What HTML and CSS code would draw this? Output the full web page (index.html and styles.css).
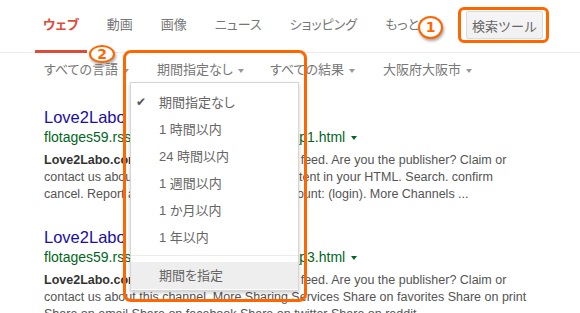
FILE: index.html
```html
<!DOCTYPE html>
<html lang="ja">
<head>
    <meta charset="UTF-8">
    <meta name="viewport" content="width=device-width, initial-scale=1.0">
    <title>検索ツール</title>
    <link rel="stylesheet" href="styles.css">
</head>
<body>
    <div class="page">
        <div class="tabs">
            <a class="tab active">ウェブ</a>
            <a class="tab">動画</a>
            <a class="tab">画像</a>
            <a class="tab">ニュース</a>
            <a class="tab">ショッピング</a>
            <a class="tab">もっと!</a>
            <button class="tools-button">検索ツール</button>
        </div>

        <div class="tools">
            <span class="tool">すべての言語<i class="caret"></i></span>
            <span class="tool">期間指定なし<i class="caret"></i></span>
            <span class="tool">すべての結果<i class="caret"></i></span>
            <span class="tool">大阪府大阪市<i class="caret"></i></span>
        </div>

        <div class="results">
            <div class="result">
                <a class="title">Love2Labo</a>
                <div class="url">flotages59.rssing.com/chan-6427301/all_p1.html<i class="url-caret"></i></div>
                <div class="snippet">
                    <b>Love2Labo.com</b> RSS channel - Love2Labo's feed. Are you the publisher? Claim or<br>
                    contact us about this channel. Embed this content in your HTML. Search. confirm<br>
                    cancel. Report adult content: click to rate: Account: (login). More Channels ...
                </div>
            </div>
            <div class="result">
                <a class="title">Love2Labo</a>
                <div class="url">flotages59.rssing.com/chan-6427301/all_p3.html<i class="url-caret"></i></div>
                <div class="snippet">
                    <b>Love2Labo.com</b> RSS channel - Love2Labo's feed. Are you the publisher? Claim or<br>
                    contact us about this channel. More Sharing Services Share on favorites Share on print<br>
                    Share on email Share on facebook Share on twitter Share on reddit
                </div>
            </div>
        </div>

        <!-- 期間のドロップダウン -->
        <div class="menu">
            <div class="menu-item checked">期間指定なし</div>
            <div class="menu-item">1 時間以内</div>
            <div class="menu-item">24 時間以内</div>
            <div class="menu-item">1 週間以内</div>
            <div class="menu-item">1 か月以内</div>
            <div class="menu-item">1 年以内</div>
            <div class="menu-sep"></div>
            <div class="menu-item hover">期間を指定</div>
        </div>

        <!-- 注釈 -->
        <div class="mark-box box-one"></div>
        <div class="mark-box box-two"></div>
        <div class="mark-num num-one">1</div>
        <div class="mark-num num-two">2</div>
    </div>
</body>
</html>
```

FILE: styles.css
```css
body {
    margin: 0;
    background: #fff;
    font-family: 'Liberation Sans', 'Noto Sans CJK JP', sans-serif;
    overflow: hidden;
}

.page {
    position: relative;
    width: 580px;
    height: 313px;
    overflow: hidden;
}

/* タブ */
.tabs {
    display: flex;
    align-items: flex-start;
    height: 52px;
    padding-left: 35px;
    border-bottom: 1px solid #ebebeb;
    font-feature-settings: "palt";
}

.tab {
    box-sizing: border-box;
    height: 53px;
    padding: 0 8px;
    margin-right: 12px;
    line-height: 50px;
    font-size: 13px;
    color: #777;
    border-bottom: 3px solid transparent;
}

.tab.active {
    color: #dd4b39;
    font-weight: bold;
    border-bottom-color: #dd4b39;
}

.tools-button {
    margin: 11px 37px 0 auto;
    width: 77px;
    height: 28px;
    padding: 0;
    font-family: inherit;
    font-size: 13px;
    color: #666;
    background: linear-gradient(#f5f5f5, #f1f1f1);
    border: 1px solid #dcdcdc;
    border-radius: 2px;
}

/* 検索ツールの行 */
.tools {
    display: flex;
    height: 34px;
    padding-left: 44px;
    line-height: 34px;
    font-size: 13px;
    color: #777;
    font-feature-settings: "palt";
}

.tool {
    width: 113px;
}

.caret {
    display: inline-block;
    margin-left: 5px;
    vertical-align: middle;
    border-top: 4px solid #999;
    border-left: 3.5px solid transparent;
    border-right: 3.5px solid transparent;
}

/* 検索結果 */
.results {
    padding: 20px 0 0 44px;
}

.result {
    margin-bottom: 24px;
    white-space: nowrap;
}

.title {
    display: block;
    font-size: 16.5px;
    line-height: 20px;
    color: #1a0dab;
}

.url {
    margin-top: 1px;
    font-size: 14px;
    line-height: 19px;
    color: #006621;
}

.url-caret {
    display: inline-block;
    margin-left: 6px;
    vertical-align: middle;
    border-top: 4px solid #006621;
    border-left: 3.5px solid transparent;
    border-right: 3.5px solid transparent;
}

.snippet {
    margin-top: 5px;
    font-size: 12.5px;
    line-height: 17px;
    color: #545454;
}

.snippet b {
    color: #333;
}

/* ドロップダウン */
.menu {
    position: absolute;
    left: 130px;
    top: 82px;
    width: 167px;
    padding: 6px 0 1px;
    background: #fff;
    border: 1px solid #d6d6d6;
    box-shadow: 0 2px 4px rgba(0, 0, 0, 0.2);
    font-size: 13px;
    color: #666;
    font-feature-settings: "palt";
}

.menu-item {
    position: relative;
    height: 27px;
    line-height: 27px;
    padding-left: 28px;
}

.menu-item.checked::before {
    content: '✔';
    position: absolute;
    left: 5px;
    color: #555;
    font-family: 'DejaVu Sans', sans-serif;
    font-size: 12px;
}

.menu-item.hover {
    background: #eee;
}

.menu-sep {
    height: 1px;
    margin: 4px 0 6px;
    background: #ebebeb;
}

/* 注釈の枠と番号 */
.mark-box {
    position: absolute;
    border: 3px solid #ff6600;
    border-radius: 8px;
}

.box-one {
    left: 458px;
    top: 7px;
    width: 85px;
    height: 30px;
    border-radius: 6px;
}

.box-two {
    left: 123px;
    top: 50px;
    width: 178px;
    height: 246px;
}

.mark-num {
    position: absolute;
    box-sizing: border-box;
    border: 2px solid #ff6600;
    border-radius: 50%;
    background: #fff;
    box-shadow: 1px 2px 3px rgba(0, 0, 0, 0.35);
    color: #ff6600;
    font-family: 'DejaVu Sans', sans-serif;
    font-weight: bold;
    font-size: 14px;
    text-align: center;
}

.num-one {
    left: 418px;
    top: 16px;
    width: 25px;
    height: 23px;
    line-height: 19px;
}

.num-two {
    left: 89px;
    top: 45px;
    width: 26px;
    height: 18px;
    line-height: 14px;
}
```
